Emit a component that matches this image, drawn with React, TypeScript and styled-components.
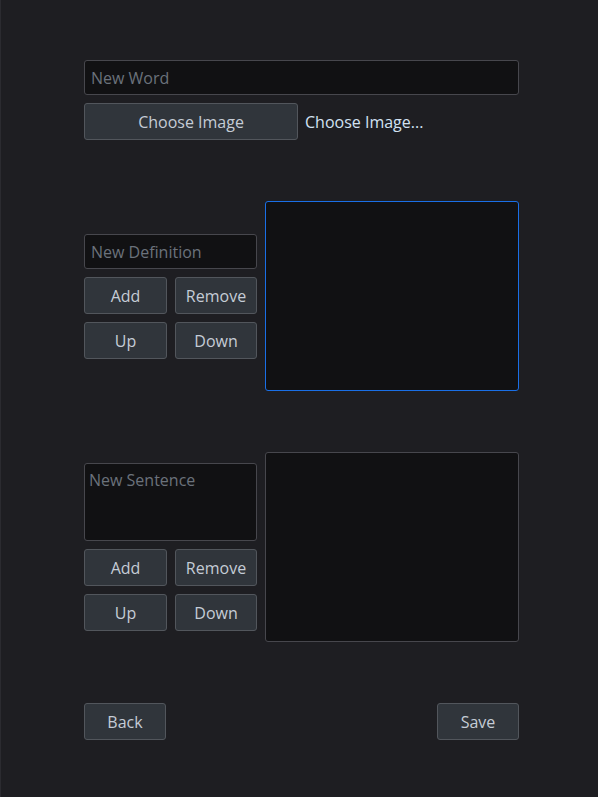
import styled, { createGlobalStyle } from "styled-components";

const GlobalStyle = createGlobalStyle`
  html, body {
    margin: 0;
    padding: 0;
    background: #1e1e22;
  }
  body {
    font-family: "Open Sans", "Noto Sans", sans-serif;
    font-size: 16px;
  }
`;

const Page = styled.div`
  box-sizing: border-box;
  width: 598px;
  height: 797px;
  background: #1e1e22;
  border-left: 1px solid #2b2b30;
  padding: 60px 0 0 83px;
`;

const Form = styled.div`
  width: 435px;
  display: flex;
  flex-direction: column;
`;

const WordBlock = styled.div`
  display: flex;
  flex-direction: column;
  gap: 8px;
`;

const TextInput = styled.input`
  box-sizing: border-box;
  width: 100%;
  height: 35px;
  padding: 1px 6px 0;
  background: #111113;
  border: 1px solid #47474d;
  border-radius: 3px;
  color: #c5ccd6;
  font-family: inherit;
  font-size: 16px;
  outline: none;
  &::placeholder {
    color: #6b727b;
  }
`;

const TextArea = styled.textarea`
  box-sizing: border-box;
  width: 100%;
  height: 78px;
  padding: 5px 4px;
  background: #111113;
  border: 1px solid #47474d;
  border-radius: 3px;
  color: #c5ccd6;
  font-family: inherit;
  font-size: 16px;
  line-height: 22px;
  resize: none;
  outline: none;
  &::placeholder {
    color: #6b727b;
  }
`;

const ImageRow = styled.div`
  display: flex;
  align-items: center;
  gap: 7px;
`;

const Button = styled.button<{ $width?: number }>`
  box-sizing: border-box;
  height: 37px;
  width: ${(p) => (p.$width ? `${p.$width}px` : "100%")};
  background: #30353b;
  border: 1px solid #52565c;
  border-radius: 3px;
  color: #c5ccd6;
  font-family: inherit;
  font-size: 16px;
  padding: 1px 0 0;
  cursor: pointer;
`;

const FileLabel = styled.span`
  color: #d2e2f2;
  font-size: 16px;
`;

const ListSection = styled.div`
  display: flex;
  align-items: center;
  gap: 8px;
  margin-top: 61px;
`;

const Controls = styled.div`
  width: 173px;
  display: flex;
  flex-direction: column;
  gap: 8px;
`;

const ButtonGrid = styled.div`
  display: grid;
  grid-template-columns: 83px 82px;
  gap: 8px;
`;

const ListBox = styled.div<{ $focused?: boolean }>`
  box-sizing: border-box;
  width: 254px;
  height: 190px;
  background: #111113;
  border: 1px solid ${(p) => (p.$focused ? "#1a6fe6" : "#47474d")};
  border-radius: 3px;
`;

const Footer = styled.div`
  display: flex;
  justify-content: space-between;
  margin-top: 61px;
`;

function ItemEditor({ multiline, placeholder, focused }: { multiline?: boolean; placeholder: string; focused?: boolean }) {
  return (
    <ListSection>
      <Controls>
        {multiline ? <TextArea placeholder={placeholder} /> : <TextInput placeholder={placeholder} />}
        <ButtonGrid>
          <Button>Add</Button>
          <Button>Remove</Button>
          <Button>Up</Button>
          <Button>Down</Button>
        </ButtonGrid>
      </Controls>
      <ListBox $focused={focused} />
    </ListSection>
  );
}

export default function App() {
  return (
    <>
      <GlobalStyle />
      <Page>
        <Form>
          <WordBlock>
            <TextInput placeholder="New Word" />
            <ImageRow>
              <Button $width={214}>Choose Image</Button>
              <FileLabel>Choose Image...</FileLabel>
            </ImageRow>
          </WordBlock>
          <ItemEditor placeholder="New Definition" focused />
          <ItemEditor placeholder="New Sentence" multiline />
          <Footer>
            <Button $width={82}>Back</Button>
            <Button $width={82}>Save</Button>
          </Footer>
        </Form>
      </Page>
    </>
  );
}
